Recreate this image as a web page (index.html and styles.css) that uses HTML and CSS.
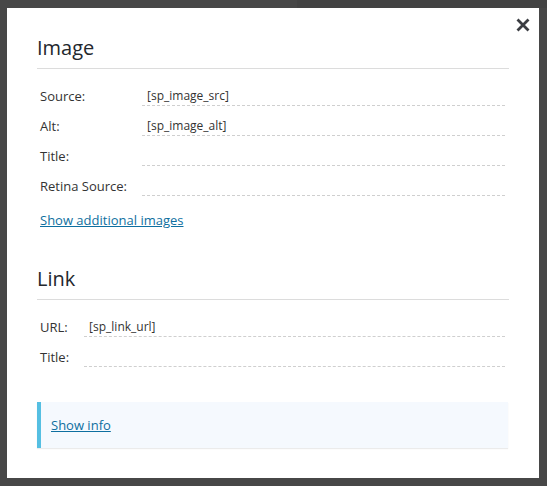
FILE: index.html
```html
<!DOCTYPE html>
<html>
<head>
<meta charset="utf-8">
<link rel="stylesheet" href="styles.css">
</head>
<body>
<div class="modal">
  <button class="close" aria-label="Close">
    <svg width="14" height="14" viewBox="0 0 14 14"><path d="M1.5 1.5 L12.5 12.5 M12.5 1.5 L1.5 12.5" stroke="#3b3d42" stroke-width="2.8" stroke-linecap="butt"/></svg>
  </button>
  <h2 class="section-title">Image</h2>
  <div class="fields">
    <label class="label">Source:</label><div class="input">[sp_image_src]</div>
    <label class="label">Alt:</label><div class="input">[sp_image_alt]</div>
    <label class="label">Title:</label><div class="input"></div>
    <label class="label">Retina Source:</label><div class="input"></div>
  </div>
  <a class="link more" href="#">Show additional images</a>
  <h2 class="section-title link-title">Link</h2>
  <div class="fields">
    <label class="label">URL:</label><div class="input">[sp_link_url]</div>
    <label class="label">Title:</label><div class="input"></div>
  </div>
  <div class="info">
    <a class="link" href="#">Show info</a>
  </div>
</div>
</body>
</html>
```
FILE: styles.css
```css
html, body {
  margin: 0;
  padding: 0;
}
body {
  width: 547px;
  height: 486px;
  background:
    linear-gradient(to right, transparent 297px, #434343 297px) top / 100% 8px no-repeat,
    #474747;
  font-family: "Open Sans", "Liberation Sans", sans-serif;
  overflow: hidden;
}
.modal {
  position: relative;
  margin: 8px 0 0 7px;
  width: 532px;
  height: 470px;
  box-sizing: border-box;
  background: #fff;
  padding: 26px 30px 0 30px;
}
.close {
  position: absolute;
  top: 10px;
  right: 9px;
  width: 14px;
  height: 14px;
  padding: 0;
  border: 0;
  background: none;
  display: flex;
}
.section-title {
  margin: 0;
  font-size: 20px;
  font-weight: 400;
  line-height: 27px;
  color: #23282d;
  padding-bottom: 7px;
  border-bottom: 1px solid #dcdcdc;
}
.fields {
  display: grid;
  grid-template-columns: max-content 1fr;
  column-gap: 15px;
  row-gap: 11px;
  margin-top: 18px;
  margin-right: 4px;
}
.label {
  font-size: 13px;
  line-height: 18px;
  color: #333;
  padding-left: 3px;
}
.input {
  font-size: 12px;
  line-height: 18px;
  color: #333;
  padding-left: 5px;
  border-bottom: 1px dashed #cfcfcf;
  height: 18px;
}
.link {
  font-size: 13px;
  line-height: 18px;
  color: #0e6fa0;
  text-decoration: underline;
}
.more {
  display: block;
  margin-top: 15px;
  padding-left: 3px;
}
.link-title {
  margin-top: 36px;
}
.info {
  margin-top: 35px;
  background: #f5f9fe;
  border-left: 4px solid #55bfe2;
  padding: 14px 10px;
  font-size: 13px;
  line-height: 18px;
  box-shadow: 0 1px 1px rgba(0, 0, 0, 0.08);
  margin-right: 1px;
}
```
